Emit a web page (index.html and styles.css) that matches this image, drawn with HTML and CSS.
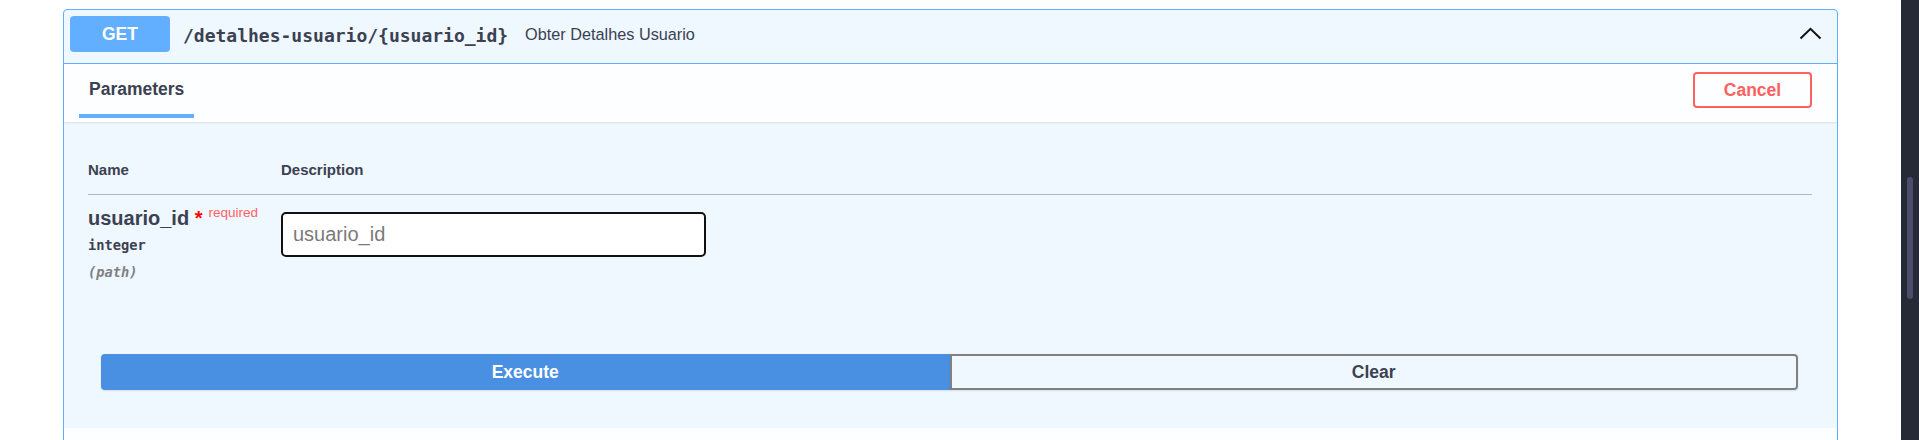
FILE: index.html
```html
<!DOCTYPE html>
<html lang="pt">
<head>
<meta charset="utf-8">
<title>Swagger - detalhes usuario</title>
<link rel="stylesheet" href="styles.css">
</head>
<body>
<div class="page">
  <div class="opblock">
    <div class="summary">
      <span class="method">GET</span>
      <span class="path">/detalhes-usuario/{usuario_id}</span>
      <span class="summary-desc">Obter Detalhes Usuario</span>
      <svg class="arrow" width="23" height="13" viewBox="0 0 23 13"><polyline points="1.5,11.5 11.5,1.8 21.5,11.5" fill="none" stroke="#111" stroke-width="2"/></svg>
    </div>
    <div class="section-header">
      <div class="tab">Parameters</div>
      <button class="btn-cancel">Cancel</button>
    </div>
    <div class="params">
      <div class="params-head">
        <div class="col-name">Name</div>
        <div class="col-desc">Description</div>
      </div>
      <div class="param-row">
        <div class="col-name">
          <div class="param-name">usuario_id<span class="star">&nbsp;*</span><span class="required">required</span></div>
          <div class="param-type">integer</div>
          <div class="param-in">(path)</div>
        </div>
        <div class="col-desc">
          <input class="param-input" type="text" placeholder="usuario_id">
        </div>
      </div>
    </div>
    <div class="execute-wrapper">
      <button class="btn-execute">Execute</button>
      <button class="btn-clear">Clear</button>
    </div>
    <div class="responses-header"></div>
  </div>
</div>
<div class="scroll-track"><div class="scroll-thumb"></div></div>
</body>
</html>
```
FILE: styles.css
```css
html, body {
  margin: 0;
  height: 440px;
  overflow: hidden;
}
body {
  display: flex;
  background: #fff;
  font-family: "Liberation Sans", Arial, sans-serif;
  color: #3b4151;
}
.page {
  flex: 1;
  padding: 9px 63px 0 63px;
  min-width: 0;
}
.scroll-track {
  width: 18px;
  background: #262a37;
  display: flex;
  justify-content: center;
  padding-top: 177px;
  box-sizing: border-box;
}
.scroll-thumb {
  width: 6px;
  height: 122px;
  border-radius: 3px;
  background: #4b4e6a;
}
.opblock {
  border: 1px solid #61affe;
  border-radius: 4px;
  background: #eff7ff;
  height: 600px;
}
.summary {
  display: flex;
  align-items: center;
  padding: 6px 15px 11px 6px;
  border-bottom: 1px solid #61affe;
}
.method {
  width: 100px;
  height: 36px;
  display: flex;
  align-items: center;
  justify-content: center;
  background: #61affe;
  color: #fff;
  border-radius: 4px;
  font-weight: 700;
  font-size: 17.5px;
}
.path {
  margin-left: 13px;
  font-family: "DejaVu Sans Mono", "Liberation Mono", monospace;
  font-weight: 700;
  font-size: 18px;
  color: #3b4151;
  margin-top: 2px;
}
.summary-desc {
  margin-left: 17px;
  font-size: 16.25px;
  color: #3b4151;
}
.arrow {
  margin-left: auto;
  margin-top: -2px;
}
.section-header {
  display: flex;
  justify-content: space-between;
  align-items: flex-start;
  padding: 0 25px 4px 15px;
  background: rgba(255,255,255,.8);
  box-shadow: 0 1px 2px rgba(0,0,0,.1);
}
.tab {
  padding: 14px 10px 14px;
  line-height: 22px;
  font-size: 17.5px;
  font-weight: 700;
  color: #3b4151;
  border-bottom: 4px solid #61affe;
}
.btn-cancel {
  margin-top: 8px;
  width: 119px;
  height: 36px;
  border: 2px solid #ff6060;
  border-radius: 4px;
  background: transparent;
  color: #ff6060;
  font-family: "Liberation Sans", Arial, sans-serif;
  font-weight: 700;
  font-size: 17.5px;
  padding: 0;
}
.params {
  padding: 0 25px 0 24px;
}
.params-head {
  display: grid;
  grid-template-columns: 193px 1fr;
  padding: 39px 0 15px;
  line-height: 18px;
  font-size: 15px;
  font-weight: 700;
  border-bottom: 1px solid #adb5c2;
}
.param-row {
  display: grid;
  grid-template-columns: 193px 1fr;
  padding: 11px 0 11px;
}
.param-name {
  font-size: 20px;
  font-weight: 700;
  line-height: 24px;
  color: #3b4151;
  white-space: nowrap;
}
.star {
  color: #f00;
}
.required {
  font-size: 13.5px;
  font-weight: 400;
  color: #ff6262;
  position: relative;
  top: -8px;
  padding-left: 6px;
}
.param-type {
  margin-top: 3px;
  font-family: "DejaVu Sans Mono", "Liberation Mono", monospace;
  font-weight: 700;
  font-size: 13.7px;
  line-height: 18px;
  color: #3b4151;
}
.param-in {
  margin-top: 9px;
  font-family: "DejaVu Sans Mono", "Liberation Mono", monospace;
  font-weight: 700;
  font-style: italic;
  font-size: 13.7px;
  line-height: 18px;
  color: #808080;
}
.param-input {
  margin-top: 6px;
  width: 425px;
  height: 45px;
  box-sizing: border-box;
  border: 2px solid #111;
  border-radius: 5px;
  background: #fff;
  padding: 0 10px;
  font-family: "Liberation Sans", Arial, sans-serif;
  font-size: 20px;
  color: #3b4151;
  outline: none;
}
.param-input::placeholder {
  color: #7a7a7a;
}
.execute-wrapper {
  display: flex;
  margin-top: 62px;
  padding: 0 39px 38px 37px;
}
.btn-execute, .btn-clear {
  flex: 1;
  height: 36px;
  box-sizing: border-box;
  font-family: "Liberation Sans", Arial, sans-serif;
  font-weight: 700;
  font-size: 17.5px;
  padding: 0;
  box-shadow: 0 1px 2px rgba(0,0,0,.1);
}
.btn-execute {
  background: #4990e2;
  border: 2px solid #4990e2;
  color: #fff;
  border-radius: 4px 0 0 4px;
}
.btn-clear {
  background: transparent;
  border: 2px solid #808080;
  color: #3b4151;
  border-radius: 0 4px 4px 0;
}
.responses-header {
  height: 60px;
  background: rgba(255,255,255,.8);
  box-shadow: 0 1px 2px rgba(0,0,0,.1);
}
```
